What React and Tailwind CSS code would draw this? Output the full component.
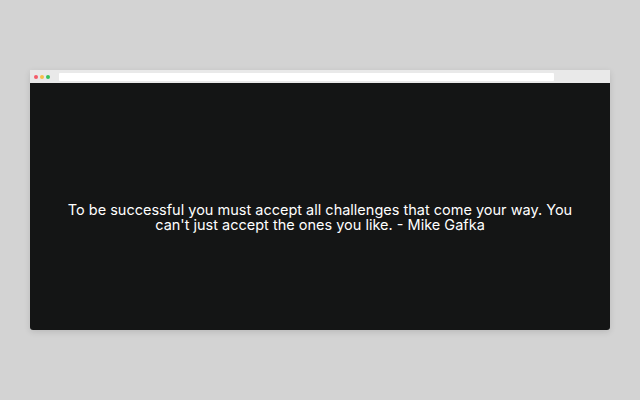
export default function App() {
  return (
    <div className="w-[640px] h-[400px] bg-[#d3d3d3] flex flex-col items-center pt-[70px]">
      <div className="w-[580px] h-[260px] flex flex-col shadow-[0_2px_6px_rgba(0,0,0,0.12)] rounded-b-[3px] overflow-hidden">
        <div className="h-[13px] bg-[#e9e9e9] flex items-center pl-[4px]">
          <div className="flex gap-[2px] items-center">
            <span className="w-[4px] h-[4px] rounded-full bg-[#f45b69]"></span>
            <span className="w-[4px] h-[4px] rounded-full bg-[#f5c04a]"></span>
            <span className="w-[4px] h-[4px] rounded-full bg-[#35c25d]"></span>
          </div>
          <div className="ml-[9px] w-[495px] h-[8px] bg-white rounded-[1px]"></div>
        </div>
        <div className="flex-1 bg-[#141515] flex items-center justify-center pt-[20px]">
          <p className="text-white text-center text-[14.5px] leading-[15px] w-[520px]" style={{ fontFamily: "Inter, 'Open Sans', sans-serif" }}>
            To be successful you must accept all challenges that come your way. You can't just accept the ones you like. - Mike Gafka
          </p>
        </div>
      </div>
    </div>
  );
}
